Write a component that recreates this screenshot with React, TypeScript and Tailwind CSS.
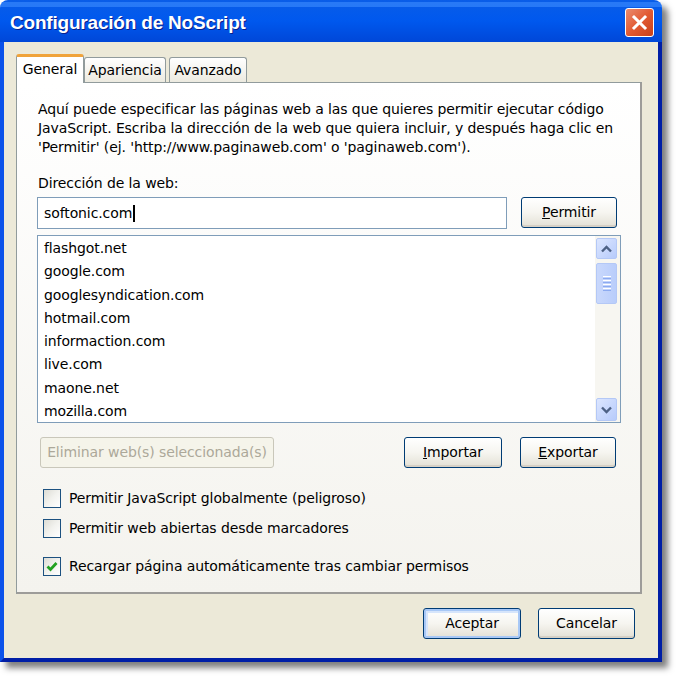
import React from "react";

const F = { fontFamily: '"DejaVu Sans", "Liberation Sans", sans-serif' };

function XPButton({ children, w, def, disabled }: { children: React.ReactNode; w: string; def?: boolean; disabled?: boolean }) {
  if (disabled) {
    return (
      <div className={`${w} h-[31px] flex items-center justify-center rounded-[3px] border border-[#c9c7ba] bg-[#f5f4ea] text-[#aca899] text-[14px] tracking-[-0.1px]`}>
        {children}
      </div>
    );
  }
  return (
    <div className={`${w} h-[31px] rounded-[3px] border border-[#003c74] bg-gradient-to-b from-white via-[#f6f5f0] to-[#e3e0d5] flex items-center justify-center text-[14px] tracking-[-0.1px] text-black ${def ? "shadow-[inset_0_0_0_2px_#a8c8f6,inset_1px_1px_0_3px_#d6e5fb]" : "shadow-[inset_0_-2px_0_#d6d0c5]"}`}>
      {children}
    </div>
  );
}

function Check({ checked }: { checked?: boolean }) {
  return (
    <div className="w-[18px] h-[19px] border border-[#1c5180] bg-gradient-to-br from-[#dcdcd5] via-[#f2f2ee] to-white flex items-center justify-center">
      {checked && (
        <svg width="12" height="11" viewBox="0 0 12 11">
          <path d="M1.5 5.5 L4.5 8.5 L10.5 2" stroke="#21a121" strokeWidth="2.8" fill="none" />
        </svg>
      )}
    </div>
  );
}

export default function App() {
  const sites = ["flashgot.net", "google.com", "googlesyndication.com", "hotmail.com", "informaction.com", "live.com", "maone.net", "mozilla.com"];
  return (
    <div className="w-[680px] h-[680px] bg-white" style={F}>
      <div className="w-[662px] h-[662px] flex flex-col rounded-t-[8px] overflow-hidden shadow-[6px_6px_6px_rgba(0,0,0,0.5)]">
        {/* title bar */}
        <div className="h-[42px] flex items-center justify-between pl-[10px] pr-[8px] bg-gradient-to-b from-[#0a5de8] via-[#0058ee] to-[#0047d8] relative">
          <div className="absolute left-0 right-0 top-[2px] h-[5px] bg-[#3d8cff] opacity-60" />
          <span className="relative mt-[4px] text-white font-bold text-[19px] tracking-[-0.2px] [text-shadow:1px_1px_0_#0a1e8c]" style={{ fontFamily: '"Liberation Sans", sans-serif' }}>
            Configuración de NoScript
          </span>
          <div className="relative w-[29px] h-[29px] mt-[3px] rounded-[3px] border border-white bg-gradient-to-br from-[#e98b6e] via-[#e25a32] to-[#c8401a] flex items-center justify-center">
            <svg width="17" height="17" viewBox="0 0 17 17">
              <path d="M3 3 L14 14 M14 3 L3 14" stroke="white" strokeWidth="3" strokeLinecap="square" />
            </svg>
          </div>
        </div>
        {/* body */}
        <div className="flex-1 bg-[#ece9d8] border-l-4 border-r-4 border-b-4 border-l-[#0b52ea] border-r-[#001ea6] border-b-[#001ea6] flex flex-col px-[12px] pt-[12px]">
          {/* tabs */}
          <div className="flex items-end h-[28px] text-[14px] tracking-[-0.1px]">
            <div className="relative z-10 w-[68px] h-[29px] -mb-[1px] bg-white border border-[#919b9c] border-b-0 border-t-[3px] border-t-[#f0a33a] rounded-t-[3px] flex items-center justify-center pb-[2px]">
              General
            </div>
            <div className="w-[82px] h-[25px] bg-gradient-to-b from-white to-[#eceae0] border border-[#919b9c] border-b-0 rounded-t-[3px] flex items-center justify-center">
              Apariencia
            </div>
            <div className="ml-[3px] w-[78px] h-[25px] bg-gradient-to-b from-white to-[#eceae0] border border-[#919b9c] border-b-0 rounded-t-[3px] flex items-center justify-center">
              Avanzado
            </div>
          </div>
          {/* panel */}
          <div className="w-[626px] h-[512px] border border-[#919b9c] border-r-2 border-b-2 border-r-[#9d9c99] border-b-[#9d9c99] bg-gradient-to-b from-white to-[#f4f3ee] px-[20px] pt-[17px] text-[14px] tracking-[-0.1px] text-black">
            <p className="leading-[19px] pl-[1px]">
              Aquí puede especificar las páginas web a las que quieres permitir ejecutar código JavaScript. Escriba la dirección de la web que quiera incluir, y después haga clic en 'Permitir' (ej. 'http://www.paginaweb.com' o 'paginaweb.com').
            </p>
            <div className="mt-[17px] leading-[19px] pl-[1px]">Dirección de la web:</div>
            <div className="mt-[4px] flex gap-[14px] items-start">
              <div className="w-[470px] h-[32px] border border-[#7f9db9] bg-white flex items-center px-[6px]">
                softonic.com<span className="w-[2px] h-[17px] bg-black ml-[1px]" />
              </div>
              <XPButton w="w-[96px]"><span><span className="underline">P</span>ermitir</span></XPButton>
            </div>
            <div className="mt-[6px] w-[584px] h-[188px] border border-[#7f9db9] bg-white flex">
              <div className="flex-1 pl-[6px] pt-[1px]">
                {sites.map((s) => (
                  <div key={s} className="leading-[23.3px]">{s}</div>
                ))}
              </div>
              <div className="w-[25px] bg-[#f7f6f1] flex flex-col pt-[2px] pb-[1px] pl-[1px] pr-[3px]">
                <div className="h-[21px] rounded-[2px] border border-[#b4c8f6] bg-gradient-to-br from-[#dce6ff] to-[#b7cbfb] flex items-center justify-center">
                  <svg width="11" height="8" viewBox="0 0 11 8"><path d="M1 6.5 L5.5 2 L10 6.5" stroke="#4d6185" strokeWidth="2.4" fill="none" /></svg>
                </div>
                <div className="mt-[4px] h-[41px] rounded-[2px] border border-[#b4c8f6] bg-gradient-to-r from-[#c9d8fc] to-[#b9cdfb] flex items-center justify-center">
                  <div className="w-[8px] flex flex-col gap-[1px]">
                    <div className="h-[1px] bg-white" /><div className="h-[1px] bg-[#8caaf0]" />
                    <div className="h-[1px] bg-white" /><div className="h-[1px] bg-[#8caaf0]" />
                    <div className="h-[1px] bg-white" /><div className="h-[1px] bg-[#8caaf0]" />
                    <div className="h-[1px] bg-white" /><div className="h-[1px] bg-[#8caaf0]" />
                  </div>
                </div>
                <div className="flex-1" />
                <div className="h-[23px] rounded-[2px] border border-[#b4c8f6] bg-gradient-to-br from-[#dce6ff] to-[#b7cbfb] flex items-center justify-center">
                  <svg width="11" height="8" viewBox="0 0 11 8"><path d="M1 1.5 L5.5 6 L10 1.5" stroke="#4d6185" strokeWidth="2.4" fill="none" /></svg>
                </div>
              </div>
            </div>
            <div className="mt-[14px] flex items-center pl-[3px]">
              <XPButton w="w-[234px]" disabled>Eliminar web(s) seleccionada(s)</XPButton>
              <div className="flex-1" />
              <XPButton w="w-[98px]"><span><span className="underline">I</span>mportar</span></XPButton>
              <div className="w-[18px]" />
              <XPButton w="w-[96px]"><span><span className="underline">E</span>xportar</span></XPButton>
              <div className="w-[4px]" />
            </div>
            <div className="mt-[20px] pl-[6px] flex flex-col">
              <div className="flex items-center gap-[8px] h-[20px]"><Check /><span>Permitir JavaScript globalmente (peligroso)</span></div>
              <div className="flex items-center gap-[8px] h-[20px] mt-[10px]"><Check /><span>Permitir web abiertas desde marcadores</span></div>
              <div className="flex items-center gap-[8px] h-[20px] mt-[18px]"><Check checked /><span>Recargar página automáticamente tras cambiar permisos</span></div>
            </div>
          </div>
          {/* bottom buttons */}
          <div className="mt-[14px] flex justify-end gap-[17px] pr-[11px]">
            <XPButton w="w-[98px]" def>Aceptar</XPButton>
            <XPButton w="w-[97px]">Cancelar</XPButton>
          </div>
        </div>
      </div>
    </div>
  );
}
